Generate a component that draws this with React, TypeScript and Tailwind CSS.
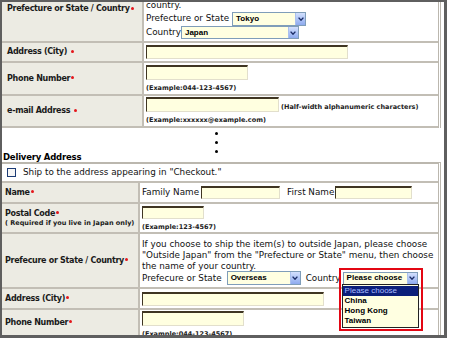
import React from 'react';

const Req = ({ space }: { space?: boolean }) => (
  <span className={`inline-block w-[3px] h-[3px] rounded-full bg-[#e4161b] align-middle mb-[1px] ${space ? 'ml-[4px]' : 'ml-[1px]'}`} />
);

const Field = ({ className }: { className: string }) => (
  <span
    className={`block shrink-0 bg-[#ffffe0] border-t-2 border-l border-r border-b border-t-[#3f3522] border-l-[#3f3522] border-r-[#e2dfcc] border-b-[#e2dfcc] ${className}`}
  />
);

const Example = ({ children, className = '' }: { children: React.ReactNode; className?: string }) => (
  <div className={`text-[6.5px] font-bold leading-[8px] text-[#222] whitespace-nowrap ${className}`}>{children}</div>
);

const Select = ({ value, className, children }: { value: string; className: string; children?: React.ReactNode }) => (
  <span
    className={`relative shrink-0 flex items-center bg-[#ffffe1] border border-[#7f9db9] font-['Liberation_Sans',Arial,sans-serif] font-bold text-[8px] text-black ${className}`}
  >
    <span className="pl-[3px] leading-none">{value}</span>
    <span className="ml-auto h-full w-[10px] flex items-center justify-center bg-gradient-to-b from-[#d3e0fd] to-[#8eaaee] border-l border-[#aac0ee]">
      <svg width="6" height="4" viewBox="0 0 6 4">
        <path d="M0.6 0.6 L3 3.2 L5.4 0.6" stroke="#1b2c66" strokeWidth="1.4" fill="none" />
      </svg>
    </span>
    {children}
  </span>
);

const lbl1 = 'w-[142px] shrink-0 bg-[#ecebe3] border-r-2 border-[#c2beb5] pl-[5px] flex items-center font-bold text-[8px] leading-[10px] tracking-[-0.3px] text-[#1a1a1a] whitespace-nowrap';
const lbl2 = 'w-[138px] shrink-0 bg-[#ecebe3] border-r-2 border-[#c2beb5] pl-[3px] flex items-center font-bold text-[8px] leading-[10px] tracking-[-0.3px] text-[#1a1a1a] whitespace-nowrap';
const row = 'flex border-b-2 border-[#c2beb5]';

export default function App() {
  return (
    <div className="w-[451px] h-[339px] bg-white font-['DejaVu_Sans',sans-serif] text-[#111]">
      <div className="w-[447px] h-[338px] border-l-2 border-t-2 border-r-[3px] border-b-[3px] border-[#5f5f5f] overflow-hidden bg-white">
        {/* Upper table (cut off at top) */}
        <div className="w-[439px] border-r-[3px] border-double border-[#bbb7ae] text-[8.8px]">
          <div className={`${row} h-[41px]`}>
            <div className={`${lbl1} !items-start pt-[2px]`}>
              <span>
                Prefecture or State / Country
                <Req />
              </span>
            </div>
            <div className="flex-1 pl-[2px] flex flex-col">
              <div className="-mt-[2px] h-[11px] leading-[11px]">country.</div>
              <div className="mt-[1px] h-[14px] flex items-center">
                <span>Prefecture or State</span>
                <Select value="Tokyo" className="ml-[3px] w-[74px] h-[14px]" />
              </div>
              <div className="h-[13px] flex items-center">
                <span>Country</span>
                <Select value="Japan" className="w-[118px] h-[13px]" />
              </div>
            </div>
          </div>

          <div className={`${row} h-[20px]`}>
            <div className={lbl1}>
              <span>
                Address (City)
                <Req space />
              </span>
            </div>
            <div className="flex-1 pl-[2px] flex items-center">
              <Field className="w-[202px] h-[14px]" />
            </div>
          </div>

          <div className={`${row} h-[33px]`}>
            <div className={lbl1}>
              <span>
                Phone Number
                <Req />
              </span>
            </div>
            <div className="flex-1 pl-[2px] pt-[2px]">
              <Field className="w-[102px] h-[15px]" />
              <Example className="mt-[4px]">(Example:044-123-4567)</Example>
            </div>
          </div>

          <div className={`${row} h-[32px]`}>
            <div className={lbl1}>
              <span>
                e-mail Address
                <Req space />
              </span>
            </div>
            <div className="flex-1 pl-[2px] pt-[1px]">
              <div className="flex items-end">
                <Field className="w-[133px] h-[15px]" />
                <Example className="ml-[2px] mb-[1px]">(Half-width alphanumeric characters)</Example>
              </div>
              <Example className="mt-[4px]">(Example:xxxxxx@example.com)</Example>
            </div>
          </div>
        </div>

        {/* Ellipsis */}
        <div className="h-[25px] pl-[213px] pt-[4px] flex flex-col gap-[6px]">
          <span className="block w-[3px] h-[3px] rounded-full bg-black" />
          <span className="block w-[3px] h-[3px] rounded-full bg-black" />
          <span className="block w-[3px] h-[3px] rounded-full bg-black" />
        </div>

        <div className="h-[9px] leading-[9px] pl-[1px] font-bold text-[8.5px] tracking-[-0.2px] text-black">Delivery Address</div>

        {/* Delivery table */}
        <div className="w-[439px] border-t-2 border-r-[3px] border-double border-[#bbb7ae] text-[8.8px]">
          <div className={`${row} h-[19px] items-center pl-[5px]`}>
            <span className="block w-[9px] h-[9px] border border-[#1c3b75] bg-[#f6f6f6]" />
            <span className="ml-[7px] whitespace-nowrap">Ship to the address appearing in "Checkout."</span>
          </div>

          <div className={`${row} h-[21px]`}>
            <div className={lbl2}>
              <span>
                Name
                <Req />
              </span>
            </div>
            <div className="flex-1 pl-[2px] flex items-center whitespace-nowrap">
              <span>Family Name</span>
              <Field className="ml-[2px] w-[79px] h-[13px]" />
              <span className="ml-[7px]">First Name</span>
              <Field className="ml-[1px] w-[77px] h-[13px]" />
            </div>
          </div>

          <div className={`${row} h-[30px]`}>
            <div className={`${lbl2} flex-col !items-start justify-center`}>
              <span>
                Postal Code
                <Req />
              </span>
              <span className="text-[6.5px] leading-[9px] tracking-normal">( Required if you live in Japan only)</span>
            </div>
            <div className="flex-1 pl-[2px] pt-[2px]">
              <Field className="w-[62px] h-[13px]" />
              <Example className="mt-[4px]">(Example:123-4567)</Example>
            </div>
          </div>

          <div className={`${row} h-[55px]`}>
            <div className={lbl2}>
              <span>
                Prefecure or State / Country
                <Req />
              </span>
            </div>
            <div className="flex-1 pl-[2px] pt-[5px] leading-[11px] whitespace-nowrap">
              <div>If you choose to ship the item(s) to outside Japan, please choose</div>
              <div>"Outside Japan" from the "Prefecture or State" menu, then choose</div>
              <div>the name of your country.</div>
              <div className="-mt-[1px] h-[14px] flex items-center">
                <span>Prefecure or State</span>
                <Select value="Overseas" className="ml-[5px] w-[74px] h-[14px]" />
                <span className="ml-[5px]">Country</span>
                <Select value="Please choose" className="ml-[2px] w-[75px] h-[13px]">
                  <span className="absolute -left-[5px] -top-[5px] w-[84px] h-[63px] border-2 border-[#e30613]" />
                  <span className="absolute -left-[2px] top-full w-[77px] h-[44px] pt-[1px] bg-[#ffffe1] border border-[#222] flex flex-col z-10">
                    <span className="h-[10px] leading-[10px] pl-[2px] bg-[#0b1f7a] text-[#a9bcff] font-normal">Please choose</span>
                    <span className="h-[10px] leading-[10px] pl-[2px]">China</span>
                    <span className="h-[10px] leading-[10px] pl-[2px]">Hong Kong</span>
                    <span className="h-[10px] leading-[10px] pl-[2px]">Taiwan</span>
                  </span>
                </Select>
              </div>
            </div>
          </div>

          <div className={`${row} h-[21px]`}>
            <div className={lbl2}>
              <span>
                Address (City)
                <Req />
              </span>
            </div>
            <div className="flex-1 pl-[2px] flex items-center">
              <Field className="w-[182px] h-[14px]" />
            </div>
          </div>

          <div className="flex h-[25px]">
            <div className={lbl2}>
              <span>
                Phone Number
                <Req />
              </span>
            </div>
            <div className="flex-1 pl-[2px] pt-[1px]">
              <Field className="w-[102px] h-[15px]" />
              <Example className="mt-[4px]">(Example:044-123-4567)</Example>
            </div>
          </div>
        </div>
      </div>
    </div>
  );
}
